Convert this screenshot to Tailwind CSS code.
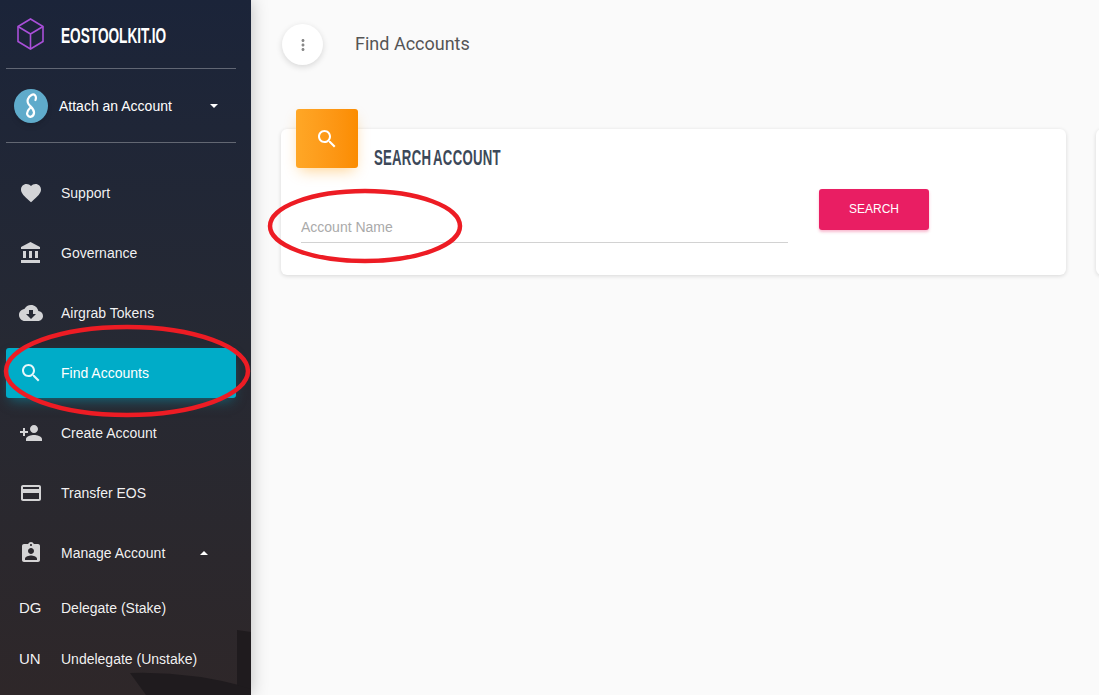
<!DOCTYPE html>
<html lang="en">
<head>
    <meta charset="UTF-8">
    <title>EOSToolkit.io - Find Accounts</title>
    <script src="https://cdn.jsdelivr.net/npm/@tailwindcss/browser@4"></script>
</head>
<body class="h-[695px] w-[1099px] overflow-hidden bg-[#fafafa] font-['Liberation_Sans',Arial,sans-serif] relative flex">
    <!-- sidebar -->
    <aside class="relative w-[251px] h-[695px] shrink-0 overflow-hidden bg-gradient-to-b from-[#1b2439] via-[#262933] to-[#2e2729] shadow-[0_0_16px_rgba(0,0,0,0.25)] z-10 text-white text-[14px]">
        <svg class="absolute left-0 bottom-0" width="251" height="90" viewBox="0 0 251 90">
            <path d="M130 68 Q190 66 251 83 V90 H146 Z" fill="#1f1b1e"/>
            <path d="M237 25 L251 27 V84 L237 80 Z" fill="#1f1b1e"/>
        </svg>
        <div class="relative">
            <div class="mx-[6px] w-[230px] h-[69px] border-b border-white/30 flex items-center pl-[11px] gap-[17px]">
                <svg width="27" height="32" viewBox="0 0 27 32" fill="none" stroke="#a94fd8" stroke-width="1.6">
                    <path d="M13.5 1 L26 8.5 V23.5 L13.5 31 L1 23.5 V8.5 Z"/>
                    <path d="M1 8.5 L13.5 16 L26 8.5 M13.5 16 V31"/>
                </svg>
                <span class="mt-[3px] w-0 whitespace-nowrap origin-left scale-x-[0.62] font-bold text-[22px] leading-none">EOSTOOLKIT.IO</span>
            </div>
            <div class="mx-[6px] w-[230px] h-[74px] border-b border-white/30 flex items-center pl-[8px]">
                <div class="w-[34px] h-[34px] rounded-full bg-[#5fabcb] shadow-md flex items-center justify-center">
                    <svg width="16" height="26" viewBox="0 0 16 26" fill="none" stroke="#fff" stroke-width="2.2" stroke-linecap="round" stroke-linejoin="round">
                        <path d="M12.5 7 C14 2.5 11 0.5 8.5 2 C5 4 3.5 8 5.5 11 C7.5 14 11.5 16 11 20 C10.5 24 6 25 4.5 22 C3.5 20 5 17 7 15"/>
                    </svg>
                </div>
                <span class="ml-[11px] mt-[1px]">Attach an Account</span>
                <span class="ml-[38px] mt-[1px] w-0 h-0 border-x-[4px] border-x-transparent border-t-[4px] border-t-white"></span>
            </div>
            <nav class="mt-[25px] mx-[6px] w-[230px] flex flex-col">
                <a class="h-[50px] mb-[10px] flex items-center pl-[13px] gap-[18px] text-white/95">
                    <svg class="w-6 h-6 fill-white/80" viewBox="0 0 24 24"><path d="M12 21.35l-1.45-1.32C5.4 15.36 2 12.28 2 8.5 2 5.42 4.42 3 7.5 3c1.74 0 3.41.81 4.5 2.09C13.09 3.81 14.76 3 16.5 3 19.58 3 22 5.42 22 8.5c0 3.78-3.4 6.86-8.55 11.54L12 21.35z"/></svg>
                    Support
                </a>
                <a class="h-[50px] mb-[10px] flex items-center pl-[13px] gap-[18px] text-white/95">
                    <svg class="w-6 h-6 fill-white/80" viewBox="0 0 24 24"><path d="M4 10v7h3v-7H4zm6 0v7h3v-7h-3zM2 22h19v-3H2v3zm14-12v7h3v-7h-3zm-4.5-9L2 6v2h19V6l-9.5-5z"/></svg>
                    Governance
                </a>
                <a class="h-[50px] mb-[10px] flex items-center pl-[13px] gap-[18px] text-white/95">
                    <svg class="w-6 h-6 fill-white/80" viewBox="0 0 24 24"><path d="M19.35 10.04C18.67 6.59 15.64 4 12 4 9.11 4 6.6 5.64 5.35 8.04 2.34 8.36 0 10.91 0 14c0 3.31 2.69 6 6 6h13c2.76 0 5-2.24 5-5 0-2.64-2.05-4.78-4.65-4.96zM17 13l-5 5-5-5h3V9h4v4h3z"/></svg>
                    Airgrab Tokens
                </a>
                <a class="h-[50px] mb-[10px] flex items-center pl-[13px] gap-[18px] text-white bg-[#00acc8] rounded-[3px] shadow-[0_6px_12px_-4px_rgba(0,172,200,0.5)]">
                    <svg class="w-6 h-6 fill-white/90" viewBox="0 0 24 24"><path d="M15.5 14h-.79l-.28-.27C15.41 12.59 16 11.11 16 9.5 16 5.91 13.09 3 9.5 3S3 5.91 3 9.5 5.91 16 9.5 16c1.61 0 3.09-.59 4.23-1.57l.27.28v.79l5 4.99L20.49 19l-4.99-5zm-6 0C7.01 14 5 11.99 5 9.5S7.01 5 9.5 5 14 7.01 14 9.5 11.99 14 9.5 14z"/></svg>
                    Find Accounts
                </a>
                <a class="h-[50px] mb-[10px] flex items-center pl-[13px] gap-[18px] text-white/95">
                    <svg class="w-6 h-6 fill-white/80" viewBox="0 0 24 24"><path d="M15 12c2.21 0 4-1.79 4-4s-1.79-4-4-4-4 1.79-4 4 1.79 4 4 4zm-9-2V7H4v3H1v2h3v3h2v-3h3v-2H6zm9 4c-2.67 0-8 1.34-8 4v2h16v-2c0-2.66-5.33-4-8-4z"/></svg>
                    Create Account
                </a>
                <a class="h-[50px] mb-[10px] flex items-center pl-[13px] gap-[18px] text-white/95">
                    <svg class="w-6 h-6 fill-white/80" viewBox="0 0 24 24"><path d="M20 4H4c-1.11 0-1.99.89-1.99 2L2 18c0 1.11.89 2 2 2h16c1.11 0 2-.89 2-2V6c0-1.11-.89-2-2-2zm0 14H4v-6h16v6zm0-10H4V6h16v2z"/></svg>
                    Transfer EOS
                </a>
                <a class="h-[50px] mb-[5px] flex items-center pl-[13px] gap-[18px] text-white/95">
                    <svg class="w-6 h-6 fill-white/80" viewBox="0 0 24 24"><path d="M19 3h-4.18C14.4 1.84 13.3 1 12 1c-1.3 0-2.4.84-2.82 2H5c-1.1 0-2 .9-2 2v14c0 1.1.9 2 2 2h14c1.1 0 2-.9 2-2V5c0-1.1-.9-2-2-2zm-7 0c.55 0 1 .45 1 1s-.45 1-1 1-1-.45-1-1 .45-1 1-1zm0 4c1.66 0 3 1.34 3 3s-1.34 3-3 3-3-1.34-3-3 1.34-3 3-3zm6 12H6v-1.4c0-2 4-3.1 6-3.1s6 1.1 6 3.1V19z"/></svg>
                    Manage Account
                    <span class="ml-[17px] w-0 h-0 border-x-[4px] border-x-transparent border-b-[4px] border-b-white"></span>
                </a>
                <a class="h-[51px] flex items-center text-white/95">
                    <span class="w-[55px] pl-[13px] text-[15px]">DG</span>Delegate (Stake)
                </a>
                <a class="h-[51px] flex items-center text-white/95">
                    <span class="w-[55px] pl-[13px] text-[15px]">UN</span>Undelegate (Unstake)
                </a>
            </nav>
        </div>
    </aside>

    <!-- main -->
    <main class="flex-1 min-w-0 pl-[30px] overflow-hidden">
        <header class="h-[89px] pt-[24px] flex items-start">
            <button class="w-[41px] h-[41px] ml-[1px] rounded-full bg-white shadow-[0_2px_6px_rgba(0,0,0,0.14)] flex items-center justify-center">
                <svg class="w-[18px] h-[18px] fill-[#888]" viewBox="0 0 24 24"><path d="M12 8c1.1 0 2-.9 2-2s-.9-2-2-2-2 .9-2 2 .9 2 2 2zm0 2c-1.1 0-2 .9-2 2s.9 2 2 2 2-.9 2-2-.9-2-2-2zm0 6c-1.1 0-2 .9-2 2s.9 2 2 2 2-.9 2-2-.9-2-2-2z"/></svg>
            </button>
            <h1 class="ml-[32px] mt-[9px] font-['Roboto',sans-serif] text-[18px] leading-[22px] text-[#555]">Find Accounts</h1>
        </header>
        <div class="mt-[40px] flex gap-[30px] w-[900px]">
            <section class="relative w-[785px] h-[146px] shrink-0 bg-white rounded-[6px] shadow-[0_1px_4px_rgba(0,0,0,0.14)]">
                <div class="absolute left-[15px] -top-[20px] w-[62px] h-[59px] rounded-[3px] bg-gradient-to-r from-[#ffa726] to-[#fb8c00] shadow-[0_6px_14px_-4px_rgba(255,152,0,0.45)] flex items-center justify-center">
                    <svg class="w-[24px] h-[24px] fill-white" viewBox="0 0 24 24"><path d="M15.5 14h-.79l-.28-.27C15.41 12.59 16 11.11 16 9.5 16 5.91 13.09 3 9.5 3S3 5.91 3 9.5 5.91 16 9.5 16c1.61 0 3.09-.59 4.23-1.57l.27.28v.79l5 4.99L20.49 19l-4.99-5zm-6 0C7.01 14 5 11.99 5 9.5S7.01 5 9.5 5 14 7.01 14 9.5 11.99 14 9.5 14z"/></svg>
                </div>
                <div class="pl-[93px] pt-[17px]">
                    <h2 class="origin-left scale-x-[0.6] whitespace-nowrap font-bold text-[22px] leading-[24px] tracking-[0.4px] [word-spacing:-2.5px] text-[#3c4858]">SEARCH ACCOUNT</h2>
                </div>
                <div class="mt-[19px] pl-[20px] flex items-start">
                    <input class="w-[487px] h-[37px] mt-[17px] pt-[5px] border-b border-[#d2d2d2] text-[14px] outline-none placeholder:text-[#aaa]" placeholder="Account Name">
                    <button class="ml-[31px] w-[110px] h-[41px] pb-[2px] rounded-[3px] bg-[#e91e63] text-white text-[12px] shadow-[0_2px_3px_rgba(233,30,99,0.3)]">SEARCH</button>
                </div>
            </section>
            <section class="w-[200px] h-[146px] shrink-0 bg-white rounded-[6px] shadow-[0_1px_4px_rgba(0,0,0,0.14)]"></section>
        </div>
    </main>

    <!-- red hand-drawn marks over the page -->
    <svg class="absolute left-0 top-0 z-20 pointer-events-none" width="1099" height="695" fill="none" stroke="#ed1c24" stroke-width="4.5">
        <ellipse cx="127" cy="371" rx="121" ry="44"/>
        <ellipse cx="365" cy="226" rx="95" ry="35"/>
    </svg>
</body>
</html>
